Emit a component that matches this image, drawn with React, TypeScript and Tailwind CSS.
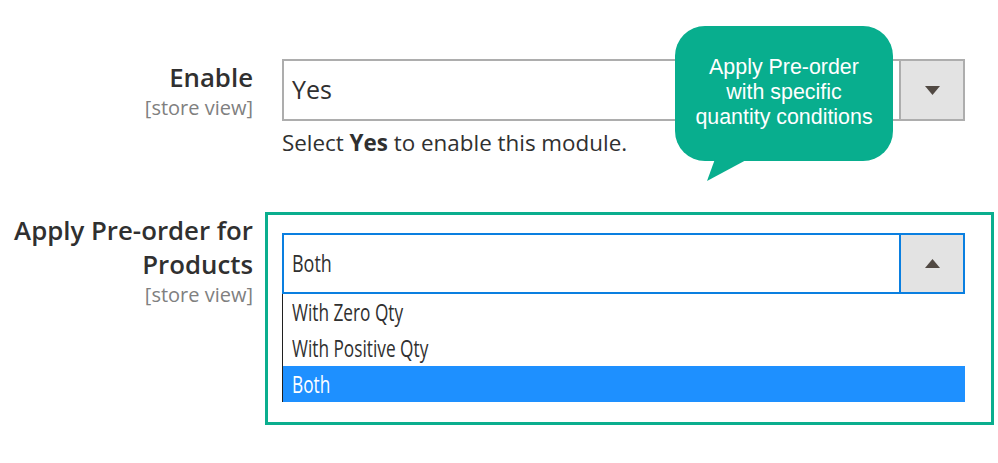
import React from "react";

const font = { fontFamily: '"Open Sans", "Liberation Sans", sans-serif' };

function Arrow({ up }: { up?: boolean }) {
  return (
    <svg width="15" height="9" viewBox="0 0 15 9" className="block">
      {up ? <polygon points="0,9 15,9 7.5,0" fill="#514943" /> : <polygon points="0,0 15,0 7.5,9" fill="#514943" />}
    </svg>
  );
}

function Label({ lines }: { lines: string[] }) {
  return (
    <div className="w-[253px] shrink-0 text-right">
      {lines.map((l) => (
        <div key={l} className="text-[25.8px] leading-[34px] font-semibold text-[#303030] whitespace-nowrap">
          {l}
        </div>
      ))}
      <div className="mt-[3px] text-[20px] leading-[21px] text-[#808080]">[store view]</div>
    </div>
  );
}

export default function App() {
  const options = ["With Zero Qty", "With Positive Qty", "Both"];
  return (
    <div className="relative w-[998px] h-[463px] bg-white overflow-hidden" style={font}>
      <div className="pt-[59px] flex flex-col">
        {/* Enable row */}
        <div className="flex items-start">
          <div className="pt-[1px]">
            <Label lines={["Enable"]} />
          </div>
          <div className="ml-[29px] w-[683px]">
            <div className="flex h-[62px] border-2 border-[#adadad] bg-white">
              <div className="flex-1 flex items-center pl-[8px] text-[25px] text-[#303030]">Yes</div>
              <div className="w-[64px] flex items-center justify-center bg-[#e3e3e3] border-l-2 border-[#adadad]">
                <Arrow />
              </div>
            </div>
            <p className="mt-[9px] text-[22.4px] leading-[26px] text-[#303030]">
              Select <b className="font-bold">Yes</b> to enable this module.
            </p>
          </div>
        </div>

        {/* Apply Pre-order row */}
        <div className="flex items-start mt-[56px]">
          <div className="pt-[1px]">
            <Label lines={["Apply Pre-order for", "Products"]} />
          </div>
          <div className="ml-[12px] border-[3px] border-[#0aae8e] pl-[14px] pr-[26px] pt-[18px] pb-[20px]">
            <div className="w-[683px]">
              <div className="flex h-[61px] border-2 border-[#0a7fe0] bg-white">
                <div className="flex-1 flex items-center pl-[8px] text-[23px] text-[#303030]">
                  <span className="inline-block origin-left scale-x-[0.78]">Both</span>
                </div>
                <div className="w-[64px] flex items-center justify-center bg-[#e3e3e3] border-l-2 border-[#0a7fe0]">
                  <Arrow up />
                </div>
              </div>
              <ul className="border-l border-[#202020]">
                {options.map((o) => (
                  <li
                    key={o}
                    className={`h-[36px] flex items-center pl-[9px] text-[23px] ${
                      o === "Both" ? "bg-[#1e90ff] text-white" : "text-[#303030]"
                    }`}
                  >
                    <span className="inline-block origin-left scale-x-[0.75] whitespace-nowrap">{o}</span>
                  </li>
                ))}
              </ul>
            </div>
          </div>
        </div>
      </div>

      {/* Tooltip */}
      <div className="absolute left-[675px] top-[26px]">
        <div
          className="w-[218px] h-[135px] rounded-[30px] bg-[#08ae8e] flex items-center justify-center text-center text-white text-[21.4px] leading-[25px] pb-[2px]"
          style={{ fontFamily: '"Liberation Sans", Arial, sans-serif' }}
        >
          <div>
            Apply Pre-order
            <br />
            with specific
            <br />
            quantity conditions
          </div>
        </div>
        <svg width="80" height="24" viewBox="0 0 80 24" className="absolute left-0 top-[133px]">
          <polygon points="40,0 73,0 32,22" fill="#08ae8e" />
        </svg>
      </div>
    </div>
  );
}
